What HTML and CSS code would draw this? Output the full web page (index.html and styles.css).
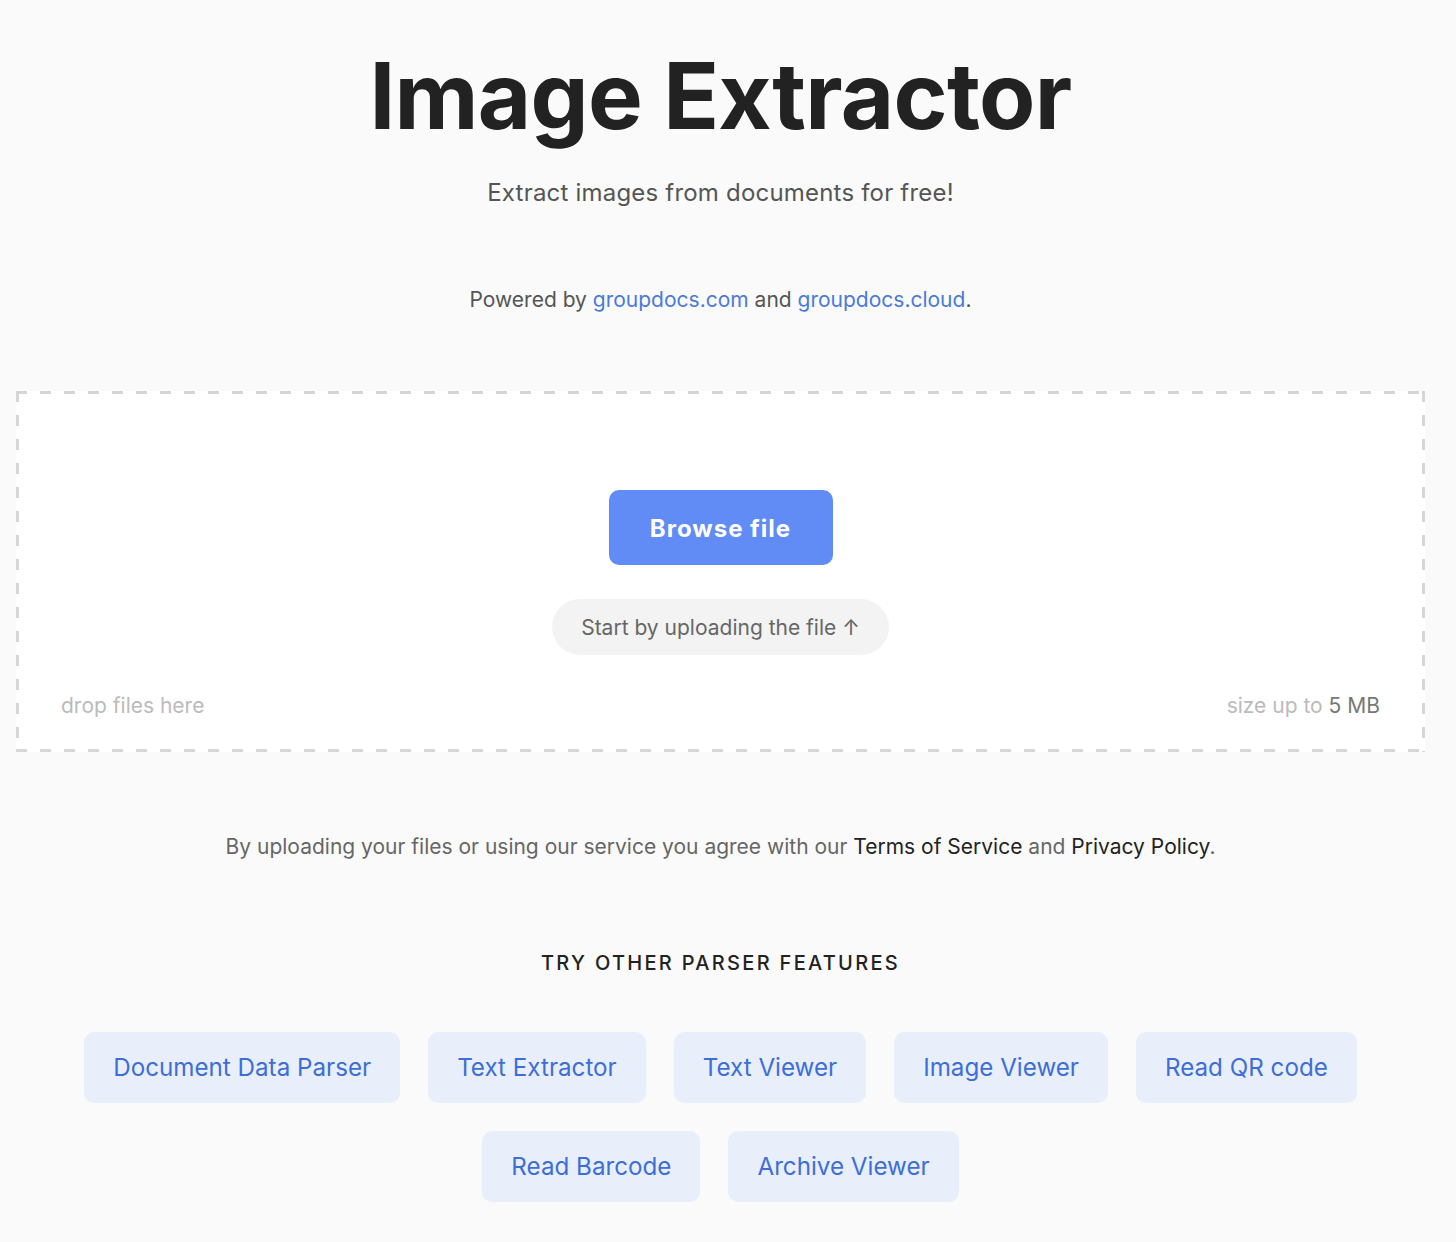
FILE: index.html
```html
<!DOCTYPE html>
<html lang="en">
<head>
<meta charset="utf-8">
<title>Image Extractor</title>
<link rel="stylesheet" href="styles.css">
</head>
<body>
<main class="page">
  <header class="hero">
    <h1 class="title">Image Extractor</h1>
    <p class="subtitle">Extract images from documents for free!</p>
    <p class="powered">Powered by <a href="#" class="link">groupdocs.com</a> and <a href="#" class="link">groupdocs.cloud</a>.</p>
  </header>

  <section class="dropzone">
    <div class="drop-center">
      <button class="browse">Browse file</button>
      <div class="hint">Start by uploading the file <span class="arrow">↑</span></div>
    </div>
    <div class="drop-foot">
      <span class="drop-label">drop files here</span>
      <span class="drop-label">size up to <b class="size">5 MB</b></span>
    </div>
  </section>

  <p class="terms">By uploading your files or using our service you agree with our <a href="#" class="dark">Terms of Service</a> and <a href="#" class="dark">Privacy Policy</a>.</p>

  <section class="other">
    <h2 class="other-title">TRY OTHER PARSER FEATURES</h2>
    <div class="features">
      <a href="#" class="feature">Document Data Parser</a>
      <a href="#" class="feature">Text Extractor</a>
      <a href="#" class="feature">Text Viewer</a>
      <a href="#" class="feature">Image Viewer</a>
      <a href="#" class="feature">Read QR code</a>
      <a href="#" class="feature">Read Barcode</a>
      <a href="#" class="feature">Archive Viewer</a>
    </div>
  </section>
</main>
</body>
</html>
```

FILE: styles.css
```css
html, body {
  margin: 0;
  padding: 0;
  background: #fafafa;
}

body {
  font-family: Inter, "Noto Sans", "Liberation Sans", sans-serif;
  color: #222;
  padding-right: 15px;
}

.page {
  display: flex;
  flex-direction: column;
  align-items: center;
}

.hero {
  display: flex;
  flex-direction: column;
  align-items: center;
  padding-top: 36px;
}

.title {
  margin: 0;
  font-size: 92px;
  font-weight: 700;
  line-height: 120px;
  letter-spacing: -0.7px;
  color: #222;
}

.subtitle {
  margin: 21px 0 0;
  font-size: 24px;
  line-height: 32px;
  letter-spacing: 0.2px;
  color: #555;
}

.powered {
  margin: 77px 0 0;
  font-size: 21px;
  line-height: 28px;
  color: #555;
}

.link {
  color: #4a7ad9;
  text-decoration: none;
}

.dropzone {
  align-self: stretch;
  margin: 77px 16px 0;
  height: 361px;
  box-sizing: border-box;
  background-color: #fff;
  background-image:
    repeating-linear-gradient(90deg, #d6d6d6 0 11px, transparent 11px 24px),
    repeating-linear-gradient(90deg, #d6d6d6 0 11px, transparent 11px 24px),
    repeating-linear-gradient(180deg, #d6d6d6 0 11px, transparent 11px 24px),
    repeating-linear-gradient(180deg, #d6d6d6 0 11px, transparent 11px 24px);
  background-size: 100% 3px, 100% 3px, 3px 100%, 3px 100%;
  background-position: 0 0, 0 100%, 0 0, 100% 0;
  background-repeat: no-repeat;
  display: flex;
  flex-direction: column;
  padding: 99px 45px 32px;
}

.drop-center {
  display: flex;
  flex-direction: column;
  align-items: center;
  gap: 34px;
}

.browse {
  width: 224px;
  height: 75px;
  border: 0;
  border-radius: 10px;
  background: #618cf5;
  color: #fff;
  font-family: inherit;
  font-size: 24px;
  font-weight: 700;
  letter-spacing: 1px;
  padding: 1px 0 0;
  cursor: pointer;
}

.hint {
  height: 56px;
  padding: 0 29px;
  display: flex;
  align-items: center;
  border-radius: 28px;
  background: #f3f3f3;
  color: #666;
  font-size: 21px;
}

.arrow {
  margin-left: 6px;
}

.drop-foot {
  margin-top: auto;
  display: flex;
  justify-content: space-between;
  font-size: 21px;
  line-height: 28px;
}

.drop-label {
  color: #bbb;
}

.size {
  font-weight: 400;
  color: #777;
}

.terms {
  margin: 81px 0 0;
  font-size: 21px;
  line-height: 28px;
  color: #666;
}

.dark {
  color: #222;
  text-decoration: none;
}

.other {
  display: flex;
  flex-direction: column;
  align-items: center;
}

.other-title {
  margin: 88px 0 0;
  font-size: 20px;
  font-weight: 500;
  line-height: 28px;
  letter-spacing: 2.3px;
  color: #222;
}

.features {
  margin-top: 55px;
  width: 1320px;
  display: flex;
  flex-wrap: wrap;
  justify-content: center;
  gap: 28px;
}

.feature {
  height: 71px;
  padding: 0 29px;
  display: flex;
  align-items: center;
  border-radius: 10px;
  background: #e8effb;
  color: #3d6ed8;
  font-size: 24.2px;
  text-decoration: none;
}
```
